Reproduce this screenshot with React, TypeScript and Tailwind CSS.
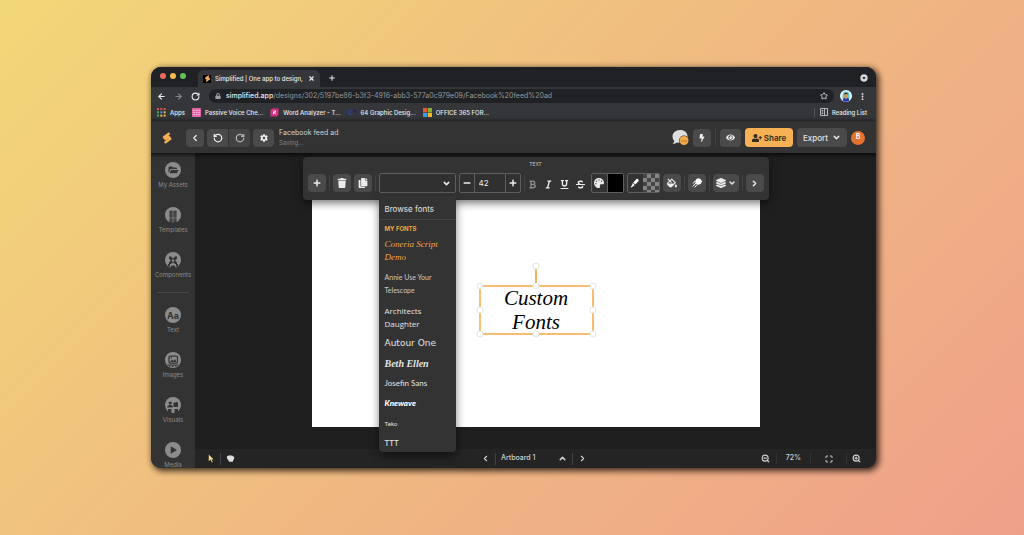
import React from 'react';
import clsx from 'clsx';
import {
  FaBold,
  FaBolt,
  FaCog,
  FaCopy,
  FaEye,
  FaFillDrip,
  FaItalic,
  FaLayerGroup,
  FaLock,
  FaMinus,
  FaPalette,
  FaPlus,
  FaStrikethrough,
  FaTrash,
  FaUnderline,
  FaUserPlus,
} from 'react-icons/fa';
import {
  ArrowLeft,
  ArrowRight,
  ChevronDown,
  ChevronLeft,
  ChevronRight,
  ChevronUp,
  EllipsisVertical,
  Maximize,
  Plus,
  RotateCcw,
  RotateCw,
  Star,
  X,
  ZoomIn,
  ZoomOut,
} from 'lucide-react';

const BoltLogo = ({ className }: { className?: string }) => (
  <svg viewBox="0 0 24 24" className={className} fill="none" stroke="#f5ad55" strokeWidth="5" strokeLinecap="round" strokeLinejoin="round">
    <path d="M15.500 3.500 6 10.500l3 3.500 6-4.500 3.500 4L9 20.500" />
  </svg>
);

const AppsGrid = () => (
  <svg viewBox="0 0 9 9" className="size-[9px]">
    {['#e2574c', '#e2574c', '#e2574c', '#58a55c', '#4a8af4', '#f1bf42', '#58a55c', '#f1bf42', '#f1bf42'].map((fill, i) => (
      <rect key={i} x={(i % 3) * 3.3} y={Math.floor(i / 3) * 3.3} width="2" height="2" fill={fill} />
    ))}
  </svg>
);

const bookmarks = [
  { label: 'Apps', icon: <AppsGrid /> },
  {
    label: 'Passive Voice Che...',
    icon: (
      <svg viewBox="0 0 9 9" className="size-[9px]">
        <rect width="9" height="9" rx="1" fill="#e667a8" />
        <path d="M1.500 2.500h1.500M1.500 4.500h1.500M1.500 6.500h1.500M4 2.500h1.500M4 4.500h1.500M4 6.500h1.500M6.500 2.500h1.500M6.500 4.500h1.500M6.500 6.500h1.500" stroke="#f9d3e6" strokeWidth=".8" />
      </svg>
    ),
  },
  {
    label: 'Word Analyzer - T...',
    icon: (
      <svg viewBox="0 0 9 9" className="size-[9px]">
        <path d="M2 .5h6.500v6.500l-2 1.500H.5V2z" fill="#d6307f" />
        <path d="M3.500 3h2v1.200h-2v2M4.500 4.500l1.200 1.700" stroke="#fff" strokeWidth=".9" fill="none" />
      </svg>
    ),
  },
  {
    label: '64 Graphic Desig...',
    icon: (
      <svg viewBox="0 0 9 9" className="size-[9px]" fill="none" strokeWidth="1.300">
        <path d="M4.500 2.500H2.500a2 2 0 0 0 0 4h2" stroke="#2b3f9c" />
        <path d="M4.500 2.500h2a1.800 1.800 0 0 1 1.800 2" stroke="#20253f" />
      </svg>
    ),
  },
  {
    label: 'OFFICE 365 FOR...',
    icon: (
      <svg viewBox="0 0 9 9" className="size-[9px]">
        <path d="M0 0h4.200v4.200H0z" fill="#e8582c" />
        <path d="M4.800 0H9v4.200H4.800z" fill="#80b432" />
        <path d="M0 4.800h4.200V9H0z" fill="#3b9be8" />
        <path d="M4.800 4.800H9V9H4.800z" fill="#f6b92b" />
      </svg>
    ),
  },
];

interface SidebarItem {
  label: string;
  glyph: React.ReactNode;
}

const Disc = ({ children }: { children: React.ReactNode }) => (
  <svg viewBox="0 0 32 32" className="size-4">
    <circle cx="16" cy="16" r="16" fill="#8c8c8c" />
    {children}
  </svg>
);

const primaryItems: SidebarItem[] = [
  {
    label: 'My Assets',
    glyph: (
      <Disc>
        <path d="M7 21V11a2 2 0 0 1 2-2h5l2 2h6a2 2 0 0 1 2 2v1H11l-3 7z" fill="#333" />
        <path d="M12 16h15l-3 6.500H9z" fill="#333" />
      </Disc>
    ),
  },
  {
    label: 'Templates',
    glyph: (
      <Disc>
        <path d="M9 7.500h14V32H9z" fill="#333" />
        <path d="M10.500 7.500h5V21h-5zM17 7.500h5V21h-5zM10.500 23h5v7h-5zM17 23h5v7h-5z" fill="#444" />
        <path d="M16 7v25M7 22h18" stroke="#8c8c8c" strokeWidth="1.500" />
      </Disc>
    ),
  },
  {
    label: 'Components',
    glyph: (
      <Disc>
        <path d="M8 9h5a3 3 0 0 0 6 0h5v5a3 3 0 0 0 0 6v4h-5a3 3 0 0 0-6 0H8v-4a3 3 0 0 0 0-6z" fill="#333" />
        <circle cx="16" cy="17" r="2.500" fill="#8c8c8c" />
        <path d="M10 32l3-5h6l3 5zM6 24h4v5H6zM22 24h4v5h-4z" fill="#333" />
      </Disc>
    ),
  },
];

const secondaryItems: SidebarItem[] = [
  {
    label: 'Text',
    glyph: (
      <span className="flex size-4 items-center justify-center rounded-full bg-[#8c8c8c] text-[9px] leading-none font-bold text-[#333]">
        Aa
      </span>
    ),
  },
  {
    label: 'Images',
    glyph: (
      <Disc>
        <rect x="8" y="8" width="17" height="14" rx="2" fill="none" stroke="#333" strokeWidth="2.500" />
        <path d="M10 20l4-5 3 3 3-4 3 6z" fill="#333" />
        <circle cx="12.500" cy="12" r="1.500" fill="#333" />
        <path d="M5 25h22v2h-4v2h-3v-2h-3v3h-3v-3h-3v2H8v-2H5z" fill="#333" />
      </Disc>
    ),
  },
  {
    label: 'Visuals',
    glyph: (
      <Disc>
        <circle cx="10.500" cy="12" r="3.200" fill="#333" />
        <path d="M4.500 21c0-4 2.500-5 6-5s5 1 5 5z" fill="#333" />
        <path d="M18 19v-7l7-2.500V19M17 11h9v9h-9z" fill="#333" />
        <path d="M6 24h7v8H6zM19 24h7v8h-7z" fill="#333" />
      </Disc>
    ),
  },
  {
    label: 'Media',
    glyph: (
      <Disc>
        <path d="M11.500 8.500v15L24 16z" fill="#333" />
      </Disc>
    ),
  },
];

const fonts = [
  { name: 'Coneria Script Demo', style: "font-['Liberation_Serif',serif] italic text-[9px] text-[#f0a548] w-[62px]" },
  { name: 'Annie Use Your Telescope', style: "font-['Liberation_Sans_Narrow','Lato',sans-serif] text-[7px] text-[#c9c9c9] w-[50px]" },
  { name: 'Architects Daughter', style: "font-['Open_Sans',sans-serif] text-[8px] w-[54px]" },
  { name: 'Autour One', style: "font-['DejaVu_Sans',sans-serif] text-[9px]" },
  { name: 'Beth Ellen', style: "font-['Liberation_Serif',serif] italic font-bold text-[10px]" },
  { name: 'Josefin Sans', style: "font-['Lato',sans-serif] text-[8px]" },
  { name: 'Knewave', style: "font-['Lato',sans-serif] font-black italic text-[8px] text-white" },
  { name: 'Teko', style: "font-['Liberation_Sans_Narrow','Roboto',sans-serif] text-[6px]" },
  { name: 'TTT', style: "font-['Lato',sans-serif] text-[8px]" },
];

const Divider = ({ className }: { className?: string }) => <span className={clsx('w-px bg-[#424242]', className)} />;

interface ToolButtonProps {
  label: string;
  className?: string;
  children: React.ReactNode;
}

const ToolButton: React.FC<ToolButtonProps> = ({ label, className = 'w-[18px]', children }) => (
  <button
    type="button"
    aria-label={label}
    className={clsx('flex h-[18px] shrink-0 items-center justify-center rounded bg-[#4a4a4a] text-[#ececec]', className)}
  >
    {children}
  </button>
);

const BrowserChrome = () => (
  <div className="shrink-0 bg-[#35363a] text-[6px] font-medium text-[#e8eaed]">
    <div className="flex h-5 items-end bg-[#202124] pr-2 pl-[9px]">
      <div className="flex gap-1 pb-2">
        <span className="size-[6px] rounded-full bg-[#ee6a5f]" />
        <span className="size-[6px] rounded-full bg-[#f5bd4f]" />
        <span className="size-[6px] rounded-full bg-[#61c454]" />
      </div>
      <div className="ml-3 flex h-[17px] w-[122px] items-center gap-1 rounded-t-md bg-[#35363a] px-[5px]">
        <span className="flex size-2 shrink-0 items-center justify-center bg-black">
          <BoltLogo className="size-[7px]" />
        </span>
        <span className="flex-1 overflow-hidden whitespace-nowrap">Simplified | One app to design,</span>
        <button type="button" aria-label="Close tab">
          <X className="size-[7px]" strokeWidth={4} />
        </button>
      </div>
      <button type="button" aria-label="New tab" className="mb-[5px] ml-2">
        <Plus className="size-2" strokeWidth={3} />
      </button>
      <svg viewBox="0 0 8 8" className="mb-[5px] ml-auto size-2">
        <circle cx="4" cy="4" r="3.700" fill="#d5d6d8" />
        <path d="M2.700 3h2.600v1L4 5.300 2.700 4z" fill="#202124" />
      </svg>
    </div>

    <div className="flex items-center pt-[2px] pr-[9px] pl-[6px] text-[7px]">
      <div className="flex gap-2">
        <button type="button" aria-label="Back"><ArrowLeft className="size-[9px]" strokeWidth={3} /></button>
        <button type="button" aria-label="Forward" className="text-[#85868a]"><ArrowRight className="size-[9px]" strokeWidth={3} /></button>
        <button type="button" aria-label="Reload"><RotateCw className="size-[9px]" strokeWidth={3} /></button>
      </div>
      <div className="ml-[9px] flex h-[14px] flex-1 items-center gap-[5px] rounded-full bg-[#202124] px-[6px]">
        <FaLock className="size-[6px] text-[#9aa0a6]" />
        <a href="#" className="flex-1 whitespace-nowrap text-[#93979c]">
          <span className="text-[#e8eaed]">simplified.app</span>
          <span className="font-normal">/designs/302/5197be86-b3f3-4916-abb3-577a0c979e09/Facebook%20feed%20ad</span>
        </a>
        <Star className="size-2 text-[#c4c7cb]" strokeWidth={3} />
      </div>
      <svg viewBox="0 0 24 24" className="ml-[6px] size-3">
        <circle cx="12" cy="12" r="12" fill="#e6f7f8" />
        <path d="M5 17V10a7 7 0 0 1 14 0v7z" fill="#5cc9d6" />
        <path d="M5 21c1-5 4-6 7-6s6 1 7 6a12 12 0 0 1-14 0z" fill="#2438b8" />
        <ellipse cx="12" cy="12" rx="3.500" ry="6" fill="#d39a55" />
        <path d="M8 9c0-5 8-5 8 0l-3-1z" fill="#3b2a20" />
      </svg>
      <EllipsisVertical className="ml-[6px] size-[9px]" strokeWidth={3} />
    </div>

    <nav aria-label="Bookmarks" className="flex h-[18px] items-center gap-[7px] pr-[9px] pl-[6px]">
      {bookmarks.map((item) => (
        <a key={item.label} href="#" className="flex items-center gap-1 whitespace-nowrap">
          {item.icon}
          {item.label}
        </a>
      ))}
      <a href="#" className="ml-auto flex items-center gap-1 border-l border-[#55565a] pl-[5px] whitespace-nowrap">
        <svg viewBox="0 0 8 8" className="size-2" fill="none" stroke="#c4c7cb" strokeWidth=".9">
          <path d="M.5.5h7v7h-7zM4.500.5v7M1.700 2.500h1.500M1.700 4h1.500M1.700 5.500h1.500" />
        </svg>
        Reading List
      </a>
    </nav>
  </div>
);

const AppHeader = () => (
  <header className="z-10 flex h-8 shrink-0 items-center border-t border-[#2e2e30] bg-[#333] pr-[11px] pl-[10px] shadow-[0_1px_4px_1px_rgba(0,0,0,0.7)]">
    <BoltLogo className="size-3" />
    <div className="ml-[13px] flex items-center gap-[3px]">
      <ToolButton label="Back"><ChevronLeft className="size-[10px]" strokeWidth={3} /></ToolButton>
      <div className="flex gap-px">
        <ToolButton label="Undo" className="w-[21px] rounded-r-none"><RotateCcw className="size-[10px]" strokeWidth={3} /></ToolButton>
        <ToolButton label="Redo" className="w-[21px] rounded-l-none opacity-70"><RotateCw className="size-[10px]" strokeWidth={3} /></ToolButton>
      </div>
      <ToolButton label="Settings" className="w-[21px]"><FaCog className="size-2" /></ToolButton>
    </div>
    <div className="ml-[5px] whitespace-nowrap">
      <h1 className="text-[7px] leading-[11px] text-[#d0d0d0]">Facebook feed ad</h1>
      <p className="text-[6px] leading-[10px] text-[#858585]">Saving...</p>
    </div>

    <div className="ml-auto flex items-center gap-1">
      <button type="button" aria-label="Chat">
        <svg viewBox="0 0 34 30" className="h-[15px] w-[17px]">
          <path d="M16 0C7 0 1 6 1 13c0 4 1.500 6.500 3.500 8.500C4.500 24 3 26 1 28c4 0 7-1.500 9-3 14 3 21-4 21-12S25 0 16 0z" fill="#dedede" />
          <circle cx="24" cy="21" r="10" fill="#333" />
          <circle cx="24" cy="21" r="9" fill="#f5a94b" />
          <path d="M19 22h2M23 22h2M27 22h2" stroke="#7a4d14" strokeWidth="2" />
        </svg>
      </button>
      <ToolButton label="Quick actions"><FaBolt className="size-2" /></ToolButton>
      <Divider className="h-[18px]" />
      <ToolButton label="Preview" className="w-[21px]"><FaEye className="size-[9px]" /></ToolButton>
      <button type="button" className="flex h-[19px] w-12 items-center justify-center gap-[2px] rounded bg-[#f7b155] text-[8px] font-semibold text-[#2f2a22]">
        <FaUserPlus className="size-[10px]" />
        Share
      </button>
      <button type="button" className="flex h-[19px] w-[50px] items-center justify-center gap-1 rounded bg-[#4a4a4a] text-[8px] font-medium text-[#e2e2e2]">
        Export
        <ChevronDown className="size-[9px]" strokeWidth={4} />
      </button>
      <span className="flex size-[14px] items-center justify-center rounded-full bg-[#e2722e] text-[7px] font-semibold text-white">B</span>
    </div>
  </header>
);

const SidebarLink = ({ label, glyph }: SidebarItem) => (
  <a href="#" className="flex h-[45px] shrink-0 flex-col items-center gap-[3px] text-[6px] leading-2 text-[#8c8c8c]">
    {glyph}
    {label}
  </a>
);

const Sidebar = () => (
  <nav aria-label="Tools" className="w-11 shrink-0 overflow-hidden bg-[#333] pt-[9px]">
    {primaryItems.map((item) => <SidebarLink key={item.label} {...item} />)}
    <hr className="mx-[6px] mt-[-5px] mb-[14px] border-[#484848]" />
    {secondaryItems.map((item) => <SidebarLink key={item.label} {...item} />)}
  </nav>
);

const FontPicker = () => (
  <div className="relative">
    <select aria-label="Font" className="block h-5 w-[77px] appearance-none rounded-xs border border-[#5e5e5e] bg-[#303030] text-[8px]">
      <option value="" />
      {fonts.map((font) => <option key={font.name}>{font.name}</option>)}
    </select>
    <ChevronDown className="pointer-events-none absolute top-[6px] right-[5px] size-[9px]" strokeWidth={4} />

    <div className="absolute top-full left-0 mt-[3px] w-full rounded-b bg-[#333] pt-[2px] pb-[2px] text-[#e4e4e4] shadow-[0_4px_8px_rgba(0,0,0,0.5)]">
      <button type="button" className="block h-[22px] w-full border-b border-[#444] pl-[6px] text-left text-[8px]">Browse fonts</button>
      <h2 className="py-1 pl-[6px] text-[6px] leading-[10px] font-bold text-[#f0a548]">MY FONTS</h2>
      <ul className="flex flex-col gap-[7px] pl-[6px]">
        {fonts.map((font) => (
          <li key={font.name} className="leading-[13px]">
            <button type="button" className={clsx('block text-left leading-[13px]', font.style)}>{font.name}</button>
          </li>
        ))}
      </ul>
    </div>
  </div>
);

const TextToolbar = () => (
  <div className="absolute top-1 left-1/2 z-20 -translate-x-1/2 rounded bg-[#333] px-[5px] pb-[7px] text-[#ececec] shadow-[0_3px_8px_rgba(0,0,0,0.55)]">
    <p className="pt-1 pb-[5px] text-center text-[5px] leading-[7px] text-[#c8c8c8]">TEXT</p>
    <div className="flex items-center gap-[3px]">
      <ToolButton label="Add"><FaPlus className="size-2" /></ToolButton>
      <Divider className="h-4" />
      <ToolButton label="Delete"><FaTrash className="size-[10px]" /></ToolButton>
      <ToolButton label="Duplicate"><FaCopy className="size-[10px]" /></ToolButton>
      <Divider className="h-4" />
      <FontPicker />
      <div className="flex h-5 items-stretch rounded-xs border border-[#5e5e5e] bg-[#303030]">
        <button type="button" aria-label="Smaller" className="flex w-[14px] items-center justify-center"><FaMinus className="size-2" /></button>
        <input aria-label="Font size" defaultValue="42" className="w-8 border-x border-[#5e5e5e] pl-1 text-[8px] outline-none" />
        <button type="button" aria-label="Larger" className="flex w-[14px] items-center justify-center"><FaPlus className="size-2" /></button>
      </div>
      <Divider className="h-4" />
      <div className="flex w-[60px] justify-between pt-[3px] pr-[3px]">
        <button type="button" aria-label="Bold" className="text-[#8a8a8a]"><FaBold className="size-[9px]" /></button>
        <button type="button" aria-label="Italic"><FaItalic className="size-[9px]" /></button>
        <button type="button" aria-label="Underline"><FaUnderline className="size-[9px]" /></button>
        <button type="button" aria-label="Strikethrough"><FaStrikethrough className="size-[9px]" /></button>
      </div>
      <button type="button" aria-label="Text colour" className="flex h-5 w-[33px] rounded-xs border border-[#5e5e5e]">
        <span className="flex h-full flex-1 items-center justify-center"><FaPalette className="size-[10px]" /></span>
        <span className="h-full flex-1 border-l border-[#5e5e5e] bg-black" />
      </button>
      <button type="button" aria-label="Highlight colour" className="flex h-5 w-[33px] rounded-xs border border-[#5e5e5e]">
        <span className="flex h-full flex-1 items-center justify-center">
          <svg viewBox="0 0 20 20" className="size-[10px]" fill="#fff">
            <path d="M13 2c2-2 6 2 4 4.500l-6.500 6.500-4-4zM5.500 10l4 4-2.500 2-3.500 2.500H1l3-4z" />
          </svg>
        </span>
        <span className="h-full flex-1 bg-[conic-gradient(#848484_25%,#454545_0_50%,#848484_0_75%,#454545_0)] bg-[length:8px_8px]" />
      </button>
      <ToolButton label="Background fill"><FaFillDrip className="size-[10px]" /></ToolButton>
      <Divider className="h-4" />
      <ToolButton label="Animate">
        <svg viewBox="0 0 20 20" className="size-[10px]" fill="none" stroke="#fff" strokeWidth="2" strokeLinecap="round">
          <circle cx="13" cy="7" r="5.500" fill="#fff" />
          <path d="M6 6.500 2.500 10.500M7.500 10.500 2 16.500M10.500 13 6 18" />
        </svg>
      </ToolButton>
      <Divider className="h-4" />
      <ToolButton label="Layers" className="w-[26px] gap-[2px]">
        <FaLayerGroup className="size-[10px]" />
        <ChevronDown className="size-2" strokeWidth={4} />
      </ToolButton>
      <Divider className="h-4" />
      <ToolButton label="More"><ChevronRight className="size-[9px]" strokeWidth={4} /></ToolButton>
    </div>
  </div>
);

const handles = [
  'left-0 top-0',
  'left-1/2 top-0',
  'left-full top-0',
  'left-0 top-1/2',
  'left-full top-1/2',
  'left-0 top-full',
  'left-1/2 top-full',
  'left-full top-full',
  'left-1/2 -top-5',
];

const Artboard = () => (
  <div className="relative aspect-video h-full bg-white">
    <div className="absolute top-[111px] left-[168px] w-[113px] text-center outline-2 -outline-offset-1 outline-[#f7bd72]">
      <p className="mx-auto w-20 font-['Liberation_Serif',serif] text-[21px] leading-6 text-black italic">Custom Fonts</p>
      <span className="absolute -top-5 left-1/2 h-5 w-[2px] -translate-x-1/2 bg-[#f7b155]" />
      {handles.map((spot) => (
        <span key={spot} className={clsx('absolute size-[7px] -translate-1/2 rounded-full border border-[#e6e6e6] bg-white', spot)} />
      ))}
    </div>
  </div>
);

const StatusBar = () => (
  <footer className="grid h-[19px] shrink-0 grid-cols-[1fr_auto_1fr] items-center bg-[#242424] pr-[15px] pl-3 text-[7px] text-[#d0d0d0]">
    <div className="flex items-center gap-[5px]">
      <button type="button" aria-label="Select">
        <svg viewBox="0 0 16 20" className="h-[9px] w-2"><path d="M3 1v15l4-3 3 6 2-1-3-6h5z" fill="#f5d583" /></svg>
      </button>
      <Divider className="h-3" />
      <button type="button" aria-label="Pan">
        <svg viewBox="0 0 20 20" className="size-[9px]"><path d="M2 8c-1-4 3-5 4-4 2-2 4-1 5 0 2-1 4 0 4 1 3 0 4 2 3 5s-2 4-3 7H7c-1-3-4-4-5-9z" fill="#dedede" /></svg>
      </button>
    </div>
    <div className="flex items-center gap-[5px]">
      <button type="button" aria-label="Previous artboard"><ChevronLeft className="size-[9px]" strokeWidth={3} /></button>
      <Divider className="h-3" />
      <button type="button" className="flex w-[66px] items-center justify-between font-medium">
        Artboard 1
        <ChevronUp className="size-[9px]" strokeWidth={4} />
      </button>
      <Divider className="h-3" />
      <button type="button" aria-label="Next artboard"><ChevronRight className="size-[9px]" strokeWidth={3} /></button>
    </div>
    <div className="flex items-center justify-end">
      <button type="button" aria-label="Zoom out"><ZoomOut className="size-[9px]" strokeWidth={3} /></button>
      <span className="ml-[6px] border-x border-[#333] px-[9px] font-medium">72%</span>
      <button type="button" aria-label="Fit to screen" className="flex h-3 w-9 items-center justify-center border-r border-[#333]">
        <Maximize className="size-2" strokeWidth={3} />
      </button>
      <button type="button" aria-label="Zoom in" className="ml-[5px]"><ZoomIn className="size-[9px]" strokeWidth={3} /></button>
    </div>
  </footer>
);

const App: React.FC = () => (
  <div className="flex h-screen bg-[linear-gradient(135deg,#f3d877,#efb981_52%,#f0a08a)] py-[67px] pr-[148px] pl-[151px] font-['Inter',sans-serif]">
    <div className="flex min-w-0 flex-1 flex-col overflow-hidden rounded-[10px] bg-[#1f1f1f] shadow-[2px_2px_6px_1px_rgba(0,0,0,0.75)]">
      <BrowserChrome />
      <AppHeader />
      <div className="flex min-h-0 flex-1">
        <Sidebar />
        <div className="flex min-w-0 flex-1 flex-col">
          <main className="relative flex min-h-0 flex-1 justify-center py-[22px]">
            <TextToolbar />
            <Artboard />
          </main>
          <StatusBar />
        </div>
      </div>
    </div>
  </div>
);

export default App;
